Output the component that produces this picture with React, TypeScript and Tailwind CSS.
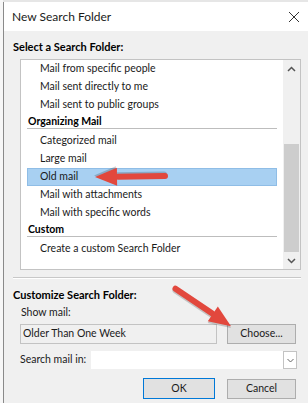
import React from "react";

const font = { fontFamily: 'Lato, "Noto Sans", sans-serif' };

function Item({ label, selected }: { label: string; selected?: boolean }) {
  return (
    <div
      className={
        "h-[18px] shrink-0 flex items-center mr-[6px] ml-[6px] text-[10.5px] text-[#1a1a1a] whitespace-nowrap " +
        (selected ? "bg-[#a8d0f2] border border-[#8fbde6] pl-[12px]" : "pl-[13px]")
      }
    >
      {label}
    </div>
  );
}

function Header({ label }: { label: string }) {
  return (
    <div className="h-[18px] shrink-0 flex flex-col ml-[6px] mr-[6px]">
      <div className="h-[14px] flex items-center pl-[1px] pt-[1px] text-[10.5px] font-bold text-black leading-none whitespace-nowrap">
        {label}
      </div>
      <div className="h-[1px] bg-[#bdbdbd]" />
    </div>
  );
}

function Btn({ label, primary }: { label: string; primary?: boolean }) {
  return (
    <div
      className={
        "flex items-center justify-center text-[10.5px] text-[#1a1a1a] bg-[#e1e1e1] border " +
        (primary ? "border-[#0078d7] w-[72px] h-[21px]" : "border-[#adadad] w-[69px] h-[20px]")
      }
    >
      {label}
    </div>
  );
}

function Arrow({ x, y, angle, len }: { x: number; y: number; angle: number; len: number }) {
  const head = 22;
  const hw = 9;
  return (
    <g transform={`translate(${x} ${y}) rotate(${angle})`}>
      <g transform="translate(1 1.5)" fill="#000" opacity="0.18">
        <rect x={0} y={-3} width={len - head + 2} height={6} rx={3} />
        <polygon points={`${len - head},${-hw} ${len},0 ${len - head},${hw}`} />
      </g>
      <g fill="#e2483d">
        <rect x={0} y={-3} width={len - head + 2} height={6} rx={3} />
        <polygon points={`${len - head},${-hw} ${len},0 ${len - head},${hw}`} />
      </g>
    </g>
  );
}

export default function App() {
  return (
    <div className="relative w-[308px] h-[403px] overflow-hidden flex bg-[#e6e6e6]" style={font}>
      <div className="w-[3px] h-full shrink-0 bg-[#f7f7f7]" />
      <div className="flex-1 mt-[2px] flex flex-col border-l border-[#8a8a8a] bg-[#f0f0f0]">
        {/* title bar */}
        <div className="h-[29px] shrink-0 bg-white flex items-center pl-[8px] pr-[7px] justify-between">
          <span className="text-[12px] text-[#1a1a1a]">New Search Folder</span>
          <svg width="12" height="12" viewBox="0 0 12 12" className="mr-[1px]">
            <path d="M1 1 L11 11 M11 1 L1 11" stroke="#333" strokeWidth="1" />
          </svg>
        </div>
        {/* body */}
        <div className="flex flex-col pl-[9px]">
          <div className="h-[16px] shrink-0 mt-[8px] flex items-center text-[11px] font-bold text-black whitespace-nowrap">
            Select a Search Folder:
          </div>
          <div className="mt-[4px] ml-[7px] w-[281px] h-[211px] shrink-0 border border-[#c3c3c3] bg-white flex">
            <div className="flex-1 flex flex-col">
              <Item label="Mail from specific people" />
              <Item label="Mail sent directly to me" />
              <Item label="Mail sent to public groups" />
              <Header label="Organizing Mail" />
              <Item label="Categorized mail" />
              <Item label="Large mail" />
              <Item label="Old mail" selected />
              <Item label="Mail with attachments" />
              <Item label="Mail with specific words" />
              <Header label="Custom" />
              <Item label="Create a custom Search Folder" />
            </div>
            <div className="w-[17px] bg-[#f0f0f0] flex flex-col">
              <div className="h-[17px] shrink-0 flex items-center justify-center">
                <svg width="9" height="6" viewBox="0 0 9 6">
                  <path d="M1 5 L4.5 1.5 L8 5" stroke="#555" strokeWidth="1.5" fill="none" />
                </svg>
              </div>
              <div className="h-[67px] shrink-0" />
              <div className="h-[108px] shrink-0 mx-[1px] bg-[#cdcdcd]" />
              <div className="flex-1 flex items-center justify-center">
                <svg width="9" height="6" viewBox="0 0 9 6">
                  <path d="M1 1 L4.5 4.5 L8 1" stroke="#555" strokeWidth="1.5" fill="none" />
                </svg>
              </div>
            </div>
          </div>
          {/* separator */}
          <div className="mt-[7px] w-[288px] shrink-0 flex flex-col">
            <div className="h-[1px] bg-[#c8c8c8]" />
            <div className="h-[1px] bg-white" />
          </div>
          <div className="h-[16px] shrink-0 mt-[8px] flex items-center text-[11px] font-bold text-black whitespace-nowrap">
            Customize Search Folder:
          </div>
          <div className="h-[14px] shrink-0 mt-[3px] ml-[8px] flex items-center text-[10.5px] text-[#1a1a1a] whitespace-nowrap">
            Show mail:
          </div>
          <div className="mt-[4px] ml-[7px] shrink-0 flex items-center">
            <div className="w-[197px] h-[20px] border border-[#c3c3c3] bg-[#f0f0f0] flex items-center pl-[2px] text-[10.5px] text-[#1a1a1a] whitespace-nowrap">
              Older Than One Week
            </div>
            <div className="ml-[10px]">
              <Btn label="Choose..." />
            </div>
          </div>
          <div className="mt-[7px] ml-[7px] shrink-0 flex items-center">
            <span className="w-[71px] text-[10.5px] text-[#1a1a1a] whitespace-nowrap">Search mail in:</span>
            <div className="w-[192px] h-[18px] bg-white" />
            <div className="w-[14px] h-[18px] bg-white border border-[#c3c3c3] flex items-center justify-center">
              <svg width="7" height="5" viewBox="0 0 7 5">
                <path d="M0.5 1 L3.5 4 L6.5 1" stroke="#666" strokeWidth="1" fill="none" />
              </svg>
            </div>
          </div>
          <div className="mt-[9px] shrink-0 flex items-center">
            <div className="ml-[130px]">
              <Btn label="OK" primary />
            </div>
            <div className="ml-[12px]">
              <Btn label="Cancel" />
            </div>
          </div>
        </div>
      </div>
      <svg className="absolute left-0 top-0 pointer-events-none" width="308" height="403">
        <Arrow x={168} y={176} angle={179.2} len={73} />
        <Arrow x={173} y={287} angle={34} len={70} />
      </svg>
    </div>
  );
}
